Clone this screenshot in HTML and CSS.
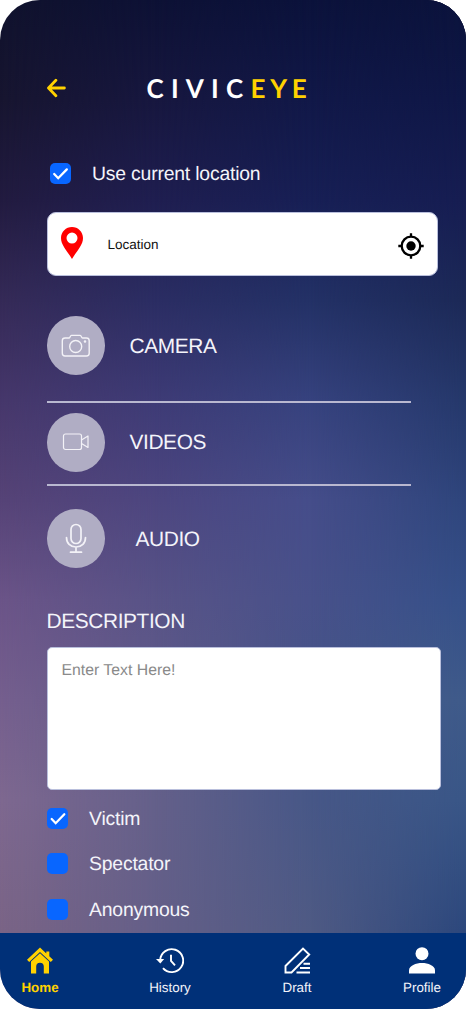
FILE: index.html
```html
<!DOCTYPE html>
<html lang="en">
<head>
<meta charset="utf-8">
<title>CivicEye</title>
<link rel="stylesheet" href="styles.css">
</head>
<body>
<div class="phone">
  <div class="sky sky-a"></div>
  <div class="sky sky-b"></div>
  <div class="sky sky-c"></div>
  <div class="sky sky-d"></div>
  <main class="content">
    <header class="header">
      <svg class="back" width="20" height="20" viewBox="0 0 20 20"><path d="M17.400 10H2.200M8.900 2.300L1.500 10l7.400 7.700"/></svg>
      <h1 class="logo"><span class="civic">CIVIC</span><span class="eye">EYE</span></h1>
    </header>
    <label class="check current">
      <svg class="box" viewBox="0 0 21 21"><path d="M4.200 11l4 4.200 8.600-8.800"/></svg>
      <span>Use current location</span>
    </label>
    <div class="location">
      <svg class="pin" width="22" height="32" viewBox="0 0 22 32"><path fill-rule="evenodd" d="M11 0C5 0 0 4.800 0 11c0 7.500 6.500 13 11 21 4.500-8 11-13.500 11-21C22 4.800 17 0 11 0zm0 5.600a5.500 5.500 0 1 1 0 11 5.500 5.500 0 0 1 0-11z"/></svg>
      <span class="place">Location</span>
      <svg class="target" width="26" height="26" viewBox="0 0 26 26"><circle class="ring" cx="13" cy="13" r="9.300"/><circle cx="13" cy="13" r="4.700"/><path class="ring" d="M13 .3V4M13 22v3.700M.3 13H4M22 13h3.700"/></svg>
    </div>
    <div class="media camera">
      <span class="disc"><svg width="30" height="26" viewBox="0 0 30 26"><path d="M4 5h4.200c.9 0 1.100-2.600 2.200-2.600h8.800c1.200 0 1.200 2.600 2.300 2.600H25.500Q28.200 5 28.200 7.700v12.600Q28.200 23 25.500 23H4Q1.300 23 1.300 20.300V7.700Q1.300 5 4 5z"/><circle cx="14.700" cy="13.500" r="6"/><circle cx="24" cy="8.500" r=".6"/></svg></span>
      <span class="name">CAMERA</span>
    </div>
    <div class="media videos">
      <span class="disc"><svg class="video-icon" width="28" height="20" viewBox="0 0 28 20"><rect x="1.500" y="2" width="18" height="15.500" rx="2"/><path d="M19.500 8l6.500-4v11.500l-6.500-4"/></svg></span>
      <span class="name">VIDEOS</span>
    </div>
    <div class="media audio">
      <span class="disc"><svg class="mic-icon" width="22" height="32" viewBox="0 0 22 32"><rect x="6" y="1.500" width="10" height="19" rx="5"/><path d="M1.500 14.500c0 5.800 3.800 9.500 9.500 9.500s9.500-3.700 9.500-9.500M11 24v5M5.500 29.200h11"/></svg></span>
      <span class="name">AUDIO</span>
    </div>
    <h2 class="heading">DESCRIPTION</h2>
    <div class="description">Enter Text Here!</div>
    <div class="roles">
      <label class="check"><svg class="box" viewBox="0 0 21 21"><path d="M4.700 11l4 4.200 8.600-8.900"/></svg><span>Victim</span></label>
      <label class="check"><svg class="box" viewBox="0 0 21 21"></svg><span>Spectator</span></label>
      <label class="check"><svg class="box" viewBox="0 0 21 21"></svg><span>Anonymous</span></label>
    </div>
  </main>
  <nav class="nav">
    <a class="item home"><svg width="26" height="26" viewBox="0 0 26 26"><path class="solid" d="M13 0L0 12.200l2.200 2.300L13 4.600l10.800 9.900 2.200-2.300-3.700-3.500V4h-3v1.900z"/><path class="solid" d="M13 5.700L4 14V26h5.200v-7a3.800 3.800 0 0 1 7.600 0v7H22V14z"/></svg><span>Home</span></a>
    <a class="item history"><svg width="28" height="26" viewBox="0 0 28 26"><path d="M4.200 12.500A11.500 11.500 0 1 1 7 20.700M15 7.200v6.300l4 4.400"/><path class="solid" d="M0 11.500h8.200L4.300 16z"/></svg><span>History</span></a>
    <a class="item draft"><svg width="27" height="27" viewBox="0 0 27 27"><path d="M1.500 25.500V19L19 1.500l6.200 6L7.500 25.500zM19.500 16.800H26M16 21H26M12.500 25.500H26"/></svg><span>Draft</span></a>
    <a class="item profile"><svg width="26" height="27" viewBox="0 0 26 27"><circle class="solid" cx="13" cy="6.700" r="6.500"/><path class="solid" d="M0 26.500v-3.300C0 18.700 7 16 13 16s13 2.700 13 7.200v3.300z"/></svg><span>Profile</span></a>
  </nav>
</div>
</body>
</html>
```
FILE: styles.css
```css
* { box-sizing: border-box; }
body { margin: 0; background: #fff; }
.phone {
  position: relative;
  display: flex;
  flex-direction: column;
  width: 466px;
  height: 1009px;
  border-radius: 40px;
  overflow: hidden;
  color: #f4f4fa;
  font-family: "Liberation Sans", Arial, sans-serif;
  text-rendering: geometricPrecision;
}
/* Four vertical colour columns, each faded into the one to its left. */
.sky { position: absolute; inset: 0; }
.sky-a { background: linear-gradient(#10122d 0, #171530 100px, #221b40 200px, #352a57 300px, #46376b 400px, #564377 500px, #6b5488 600px, #755f8e 700px, #7e6890 800px, #7a6486 932px); }
.sky-b {
  background: linear-gradient(#0d1135 0, #17173f 100px, #1f1e50 200px, #2b2d63 300px, #3e3b76 400px, #4d4680 500px, #585387 600px, #605b89 700px, #64608a 800px, #645f88 932px);
  mask-image: linear-gradient(to right, transparent 0, #000 33.3%);
}
.sky-c {
  background: linear-gradient(#0b123b 0, #111848 100px, #171f55 200px, #233166 300px, #36427e 400px, #454d8a 500px, #48518a 600px, #465488 700px, #475787 800px, #4f5a84 932px);
  mask-image: linear-gradient(to right, transparent 33.3%, #000 66.6%);
}
.sky-d {
  background: linear-gradient(#0b133c 0, #0f1747 100px, #161d52 200px, #1c2957 300px, #25386b 400px, #2e457c 500px, #355089 600px, #3f5b8a 700px, #395687 800px, #2c477c 932px);
  mask-image: linear-gradient(to right, transparent 66.6%, #000 100%);
}
.content {
  position: relative;
  flex: 1;
  display: flex;
  flex-direction: column;
  padding: 72px 25px 0 46.500px;
}
.header { display: flex; align-items: center; height: 32px; }
svg { flex: none; }
.back { fill: none; stroke: #ffd100; stroke-width: 2.800; stroke-linecap: round; stroke-linejoin: round; }
.logo { margin: 0 0 0 80px; font: 700 26px/32px Lato, sans-serif; white-space: nowrap; color: #fff; }
.civic { letter-spacing: 7.200px; }
.eye { letter-spacing: 4.800px; color: #ffd100; }
.check { display: flex; align-items: center; height: 21px; font-size: 19.400px; letter-spacing: -.2px; gap: 21.500px; }
.check span { padding-top: 2px; }
.box { width: 21px; height: 21px; border-radius: 5px; background: #0866ff; fill: none; stroke: #fff; stroke-width: 2.300; stroke-linecap: round; }
.current { margin: 59px 0 0 3px; }
.location {
  display: flex;
  align-items: center;
  width: 391px;
  height: 64px;
  margin-top: 28px;
  padding: 0 12.500px 0 13.500px;
  border: 1px solid #b9bfdc;
  border-radius: 9px;
  background: #fff;
}
.pin { fill: #f00; margin-bottom: 2px; }
.place { flex: 1; margin: 0 0 0 24.500px; font-size: 13.500px; color: #111; }
.target { fill: #000; margin-top: 4px; }
.ring { fill: none; stroke: #000; stroke-width: 2.300; }
.media { display: flex; align-items: center; gap: 24.500px; width: 364.500px; font-size: 20.900px; letter-spacing: -.4px; }
.name { padding-top: 2px; }
.disc { display: flex; align-items: center; justify-content: center; width: 58.500px; height: 59px; border-radius: 50%; background: #b0adc4; }
.disc svg { fill: none; stroke: #f3f2f7; stroke-width: 1.400; stroke-linejoin: round; stroke-linecap: round; }
.disc .video-icon { stroke-width: 1.200; }
.disc .mic-icon { stroke-width: 1.700; }
.camera { height: 127px; padding: 40px 0 26px; border-bottom: 2px solid #b9b8d0; }
.videos { height: 83px; border-bottom: 2px solid #b9b8d0; padding-bottom: 3px; }
.audio { height: 105px; gap: 30.500px; }
.heading { margin: 13.500px 0 0; font: 400 20.900px/34px "Liberation Sans", Arial, sans-serif; letter-spacing: -.4px; }
.description {
  width: 394.500px;
  height: 143px;
  margin-top: 8px;
  padding: 14px;
  border: 1px solid #b9bfdc;
  border-radius: 5px;
  background: #fff;
  color: #8a8a8a;
  font-size: 15.800px;
  line-height: 18px;
}
.roles { display: flex; flex-direction: column; gap: 24.300px; margin-top: 18.500px; }
.nav {
  position: relative;
  display: grid;
  grid-template-columns: 80px 180px 74px 1fr;
  height: 76.500px;
  padding-top: 14px;
  background: #003078;
  font-size: 13.400px;
}
.item { display: flex; flex-direction: column; align-items: center; gap: 6px; line-height: 16px; }
.item svg { height: 27px; fill: none; stroke: #fff; stroke-width: 1.900; }
.item .solid { fill: #fff; stroke: none; }
.home { color: #ffd100; font-weight: 700; }
.home .solid { fill: #ffd100; }
.profile { padding-left: 44px; }
```
